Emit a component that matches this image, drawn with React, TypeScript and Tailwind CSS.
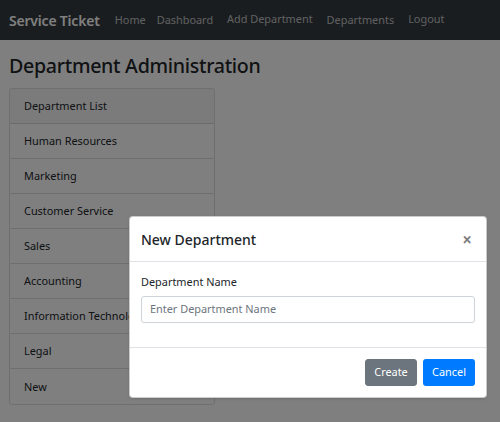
import React from "react";

const items = [
  "Human Resources",
  "Marketing",
  "Customer Service",
  "Sales",
  "Accounting",
  "Information Technology",
  "Legal",
  "New",
];

export default function App() {
  return (
    <div
      className="relative w-[500px] h-[422px] overflow-hidden bg-white text-[#212529]"
      style={{ fontFamily: '"Noto Sans", "Open Sans", sans-serif' }}
    >
      <nav className="h-[40px] bg-[#343a40] flex items-center pl-[9px]">
        <span className="text-white font-semibold text-[14px] tracking-[-0.2px]">Service Ticket</span>
        <div className="flex items-center text-[10.9px] text-white/70 ml-[15px]">
          <span>Home</span>
          <span className="ml-[11px]">Dashboard</span>
          <span className="ml-[14px] -mt-[1px]">Add Department</span>
          <span className="ml-[14px]">Departments</span>
          <span className="ml-[14px] -mt-[1px]">Logout</span>
        </div>
      </nav>
      <main className="px-[9px]">
        <h2 className="text-[19.6px] font-medium leading-[1.2] mt-[14px] mb-[10px] tracking-[-0.3px]">
          Department Administration
        </h2>
        <div className="w-[206px] border border-black/[0.125] rounded-[3px] text-[10.9px]">
          <div className="h-[35px] flex items-center px-[14px] pt-[2px] bg-black/[0.03] border-b border-black/[0.125]">
            Department List
          </div>
          {items.map((t, i) => (
            <div
              key={t}
              className={`h-[35px] flex items-center px-[14px] pt-[2px] whitespace-nowrap overflow-hidden ${
                i < items.length - 1 ? "border-b border-black/[0.125]" : ""
              }`}
            >
              {t}
            </div>
          ))}
        </div>
      </main>

      <div className="absolute inset-0 bg-black/50" />

      <div className="absolute left-[129px] top-[216px] w-[358px] bg-white rounded-[4px] border border-black/20 shadow">
        <div className="h-[45px] flex items-center justify-between px-[11px] border-b border-[#dee2e6]">
          <span className="text-[14px] font-medium">New Department</span>
          <span className="text-[17px] leading-none text-black/50 mr-[3px] font-bold">×</span>
        </div>
        <div className="px-[11px] pt-[12px] pb-[11px] h-[85px]">
          <div className="text-[10.9px] leading-[16px] mb-[6px]">Department Name</div>
          <div className="h-[27px] border border-[#ced4da] rounded-[3px] flex items-center px-[8px] text-[10.9px] text-[#6c757d]">
            Enter Department Name
          </div>
        </div>
        <div className="h-[50px] flex items-center justify-end gap-[6px] px-[11px] border-t border-[#dee2e6]">
          <button className="h-[27px] w-[52px] rounded-[3px] bg-[#6c757d] border border-[#6c757d] text-white text-[10.9px]">
            Create
          </button>
          <button className="h-[27px] w-[52px] rounded-[3px] bg-[#007bff] text-white text-[10.9px]">
            Cancel
          </button>
        </div>
      </div>
    </div>
  );
}
